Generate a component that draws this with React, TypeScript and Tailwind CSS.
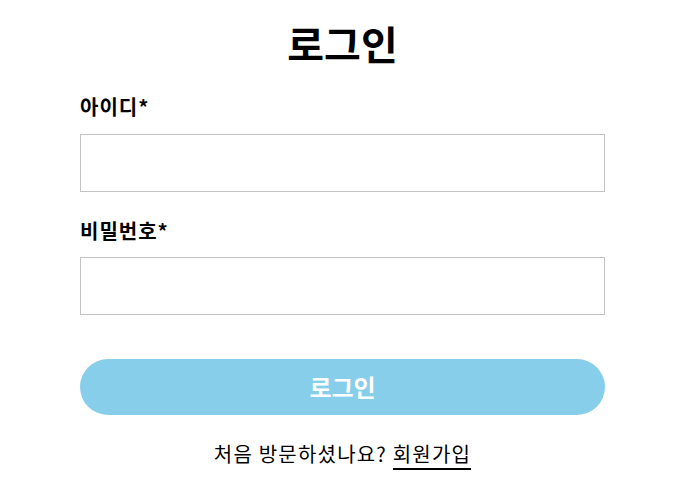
import React, { useState } from 'react';

const font = { fontFamily: '"Noto Sans CJK KR", "Liberation Sans", sans-serif' };

const App: React.FC = () => {
  const [id, setId] = useState('');
  const [pw, setPw] = useState('');

  return (
    <div className="min-h-screen bg-white text-black" style={font}>
      <form className="ml-[80px] w-[525px] pt-[13px]" onSubmit={(e) => e.preventDefault()}>
        <h1 className="text-center text-[40px] font-bold leading-[60px]">로그인</h1>

        <label htmlFor="id" className="mt-[19px] block text-[20px] font-bold leading-[30px] tracking-[1px]">
          아이디*
        </label>
        <input
          id="id"
          type="text"
          value={id}
          onChange={(e) => setId(e.target.value)}
          className="mt-[12px] block h-[58px] w-full border border-[#c4c4c4] px-3 text-[16px] outline-none"
        />

        <label htmlFor="pw" className="mt-[24px] block text-[20px] font-bold leading-[30px] tracking-[1px]">
          비밀번호*
        </label>
        <input
          id="pw"
          type="password"
          value={pw}
          onChange={(e) => setPw(e.target.value)}
          className="mt-[11px] block h-[58px] w-full border border-[#c4c4c4] px-3 text-[16px] outline-none"
        />

        <button
          type="submit"
          className="mt-[44px] block h-[56px] w-full rounded-full bg-[#87ceeb] text-[24px] font-bold leading-[36px] text-white"
        >
          로그인
        </button>

        <p className="mt-[24px] text-center text-[20px] leading-[30px] tracking-[1.2px]">
          처음 방문하셨나요?{' '}
          <a href="#" className="border-b-2 border-black">
            회원가입
          </a>
        </p>
      </form>
    </div>
  );
};

export default App;
